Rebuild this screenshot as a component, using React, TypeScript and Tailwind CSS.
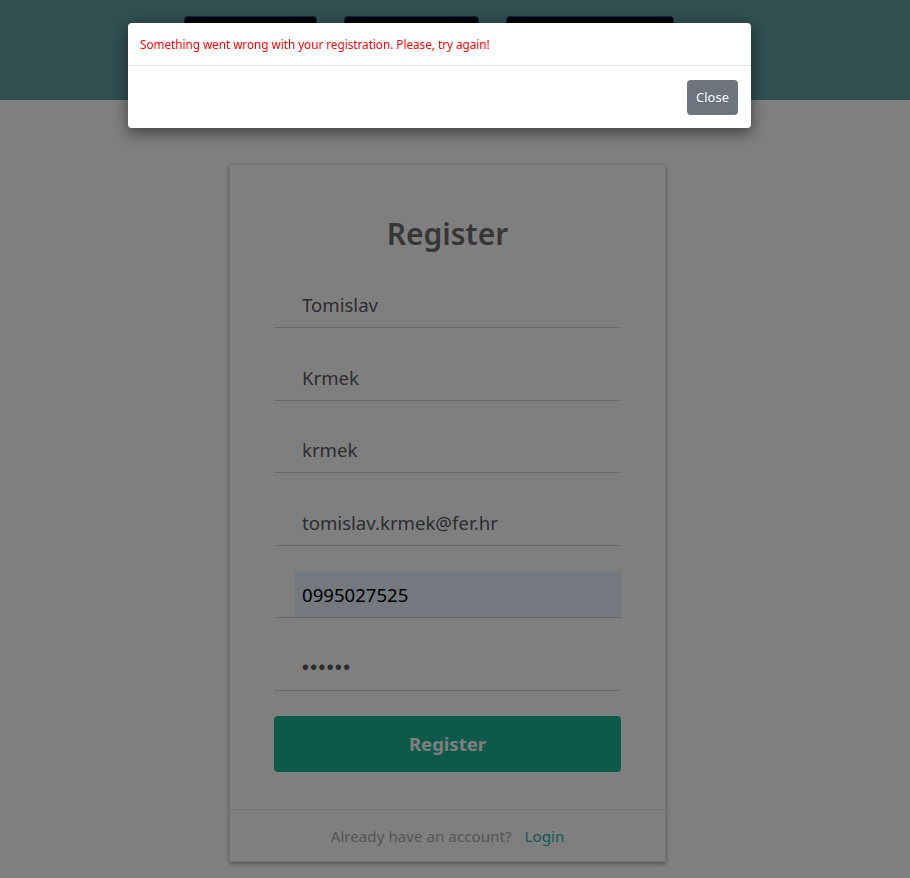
import React from "react";

const font = { fontFamily: '"Noto Sans", "Open Sans", Arial, sans-serif' };

function Field({ value, autofill, password }: { value: string; autofill?: boolean; password?: boolean }) {
  return (
    <div className="flex border-b border-[#d2d2d2] mt-[25.5px] first:mt-0">
      <div
        className={
          "ml-[21px] flex-1 h-[46px] flex items-center pl-[7px] pt-[2px] text-[18.6px] " +
          (autofill ? "bg-[#e8f0fe] text-black" : "text-[#5a5a62]")
        }
      >
        {password ? <span className="tracking-[1.5px] text-[18px] font-bold">••••••</span> : value}
      </div>
    </div>
  );
}

export default function App() {
  return (
    <div className="relative min-h-[878px] bg-white" style={font}>
      <header className="h-[100px] bg-[#5f9ea0] flex items-start pt-[16px] pl-[184px] gap-[27px]">
        <div className="w-[133px] h-[40px] bg-black border border-[#1a4aa0] rounded-[4px]" />
        <div className="w-[135px] h-[40px] bg-black border border-[#1a4aa0] rounded-[4px]" />
        <div className="w-[168px] h-[40px] bg-black border border-[#1a4aa0] rounded-[4px]" />
      </header>
      <div className="w-[895px]">
        <div className="flex justify-center pt-[64px]">
          <div className="w-[437px] bg-white border border-[#e8e8e8] shadow-[0_2px_4px_rgba(0,0,0,0.35)]">
            <div className="px-[44px] pt-[49px] pb-[37px]">
              <h2 className="text-center text-[30px] leading-[40px] font-semibold text-[#6c6c6c] mb-[27px]">Register</h2>
              <div className="flex flex-col">
                <Field value="Tomislav" />
                <Field value="Krmek" />
                <Field value="krmek" />
                <Field value="tomislav.krmek@fer.hr" />
                <Field value="0995027525" autofill />
                <Field value="" password />
              </div>
              <button className="mt-[25.5px] w-full h-[56px] rounded-[4px] bg-[#1ab496] text-white text-[18.5px] font-bold">
                Register
              </button>
            </div>
            <div className="border-t border-[#e0e0e0] h-[52px] flex items-center justify-center gap-[13px] text-[15.2px] pt-[1px]">
              <span className="text-[#aaaaaa]">Already have an account?</span>
              <span className="text-[#1db4aa]">Login</span>
            </div>
          </div>
        </div>
      </div>
      <div className="fixed inset-0 bg-black/50" />
      <div className="fixed top-[23px] left-[128px] w-[623px] bg-white rounded-[4px] shadow-[0_5px_15px_rgba(0,0,0,0.5)]">
        <div className="h-[43px] flex items-center px-[12px] pt-[2px] border-b border-[#e2e2ea]">
          <span className="text-[11.7px] text-[#ff0000]">Something went wrong with your registration. Please, try again!</span>
        </div>
        <div className="h-[62px] flex items-center justify-end px-[13px] pt-[1px]">
          <button className="w-[51px] h-[35px] rounded-[4px] bg-[#6c757d] text-white text-[13px]">Close</button>
        </div>
      </div>
    </div>
  );
}
